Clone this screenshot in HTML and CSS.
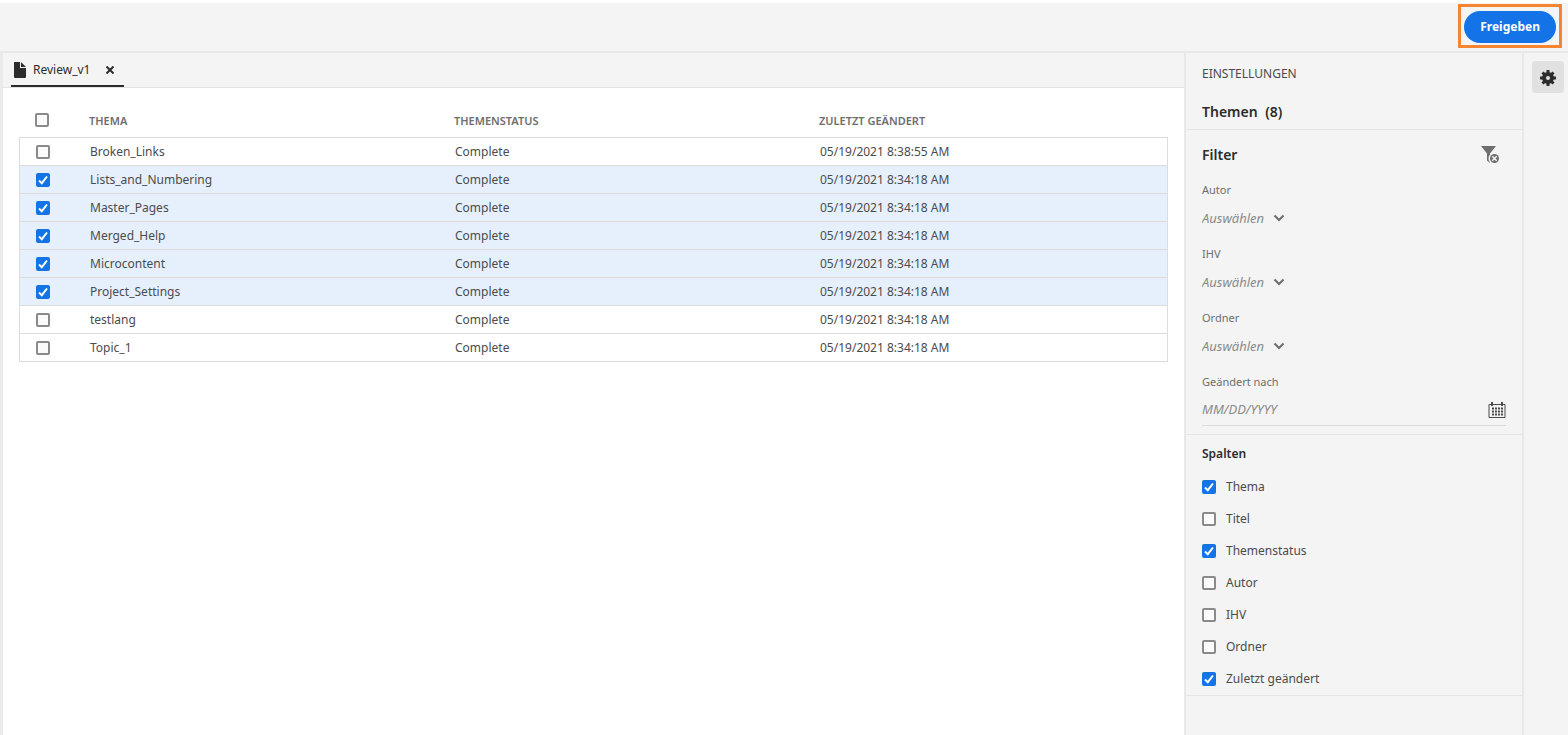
FILE: index.html
```html
<!DOCTYPE html>
<html lang="de">
<head>
<meta charset="utf-8">
<title>Review_v1</title>
<link rel="stylesheet" href="styles.css">
</head>
<body>
<header class="topbar">
  <div class="highlight"><button class="share" type="button">Freigeben</button></div>
</header>
<div class="workspace">
  <main class="main">
    <nav class="tabs">
      <div class="tab">
        <svg class="icon-doc" viewBox="0 0 12 16" aria-hidden="true"><path d="M0 0h6v6h6v9a1 1 0 0 1-1 1H1a1 1 0 0 1-1-1z"/><path d="M7 0l5 5H7z"/></svg>
        <span class="tab-name">Review_v1</span>
        <button class="close" type="button" aria-label="Schließen"><svg viewBox="0 0 8 8" aria-hidden="true"><path d="M0.5 0.5l7 7M7.500 0.5l-7 7"/></svg></button>
      </div>
    </nav>
    <div class="content">
      <table class="topics">
        <thead>
          <tr><th class="pick"><input class="check" type="checkbox" aria-label="Alle auswählen"></th><th class="col">Thema</th><th class="col">Themenstatus</th><th>Zuletzt geändert</th></tr>
        </thead>
        <tbody>
          <tr><td><input class="check" type="checkbox" aria-label="Broken_Links"></td><td>Broken_Links</td><td>Complete</td><td>05/19/2021 8:38:55 AM</td></tr>
          <tr class="selected"><td><input class="check" type="checkbox" checked aria-label="Lists_and_Numbering"></td><td>Lists_and_Numbering</td><td>Complete</td><td>05/19/2021 8:34:18 AM</td></tr>
          <tr class="selected"><td><input class="check" type="checkbox" checked aria-label="Master_Pages"></td><td>Master_Pages</td><td>Complete</td><td>05/19/2021 8:34:18 AM</td></tr>
          <tr class="selected"><td><input class="check" type="checkbox" checked aria-label="Merged_Help"></td><td>Merged_Help</td><td>Complete</td><td>05/19/2021 8:34:18 AM</td></tr>
          <tr class="selected"><td><input class="check" type="checkbox" checked aria-label="Microcontent"></td><td>Microcontent</td><td>Complete</td><td>05/19/2021 8:34:18 AM</td></tr>
          <tr class="selected"><td><input class="check" type="checkbox" checked aria-label="Project_Settings"></td><td>Project_Settings</td><td>Complete</td><td>05/19/2021 8:34:18 AM</td></tr>
          <tr><td><input class="check" type="checkbox" aria-label="testlang"></td><td>testlang</td><td>Complete</td><td>05/19/2021 8:34:18 AM</td></tr>
          <tr><td><input class="check" type="checkbox" aria-label="Topic_1"></td><td>Topic_1</td><td>Complete</td><td>05/19/2021 8:34:18 AM</td></tr>
        </tbody>
      </table>
    </div>
  </main>
  <aside class="settings">
    <section class="section intro">
      <div class="caption">EINSTELLUNGEN</div>
      <h2 class="title">Themen <span class="count">(8)</span></h2>
    </section>
    <section class="section filters">
      <div class="filter-head">
        <h2 class="title">Filter</h2>
        <button class="plain" type="button" aria-label="Filter löschen"><svg class="icon-filter" viewBox="0 0 18 18" aria-hidden="true"><path d="M0 0h15L9 7.500V17L6 14.500V7.500z"/><circle class="halo" cx="13" cy="12.500" r="5.500"/><circle cx="13.500" cy="12.500" r="4.500"/><path class="cross" d="M11.300 10.300l4.400 4.400M15.700 10.300l-4.400 4.400"/></svg></button>
      </div>
      <div class="field">
        <label for="author">Autor</label>
        <div class="picker"><select id="author"><option>Auswählen</option></select><svg class="chevron" viewBox="0 0 12 8" aria-hidden="true"><path d="M1.500 1.500L6 6l4.500-4.500"/></svg></div>
      </div>
      <div class="field">
        <label for="toc">IHV</label>
        <div class="picker"><select id="toc"><option>Auswählen</option></select><svg class="chevron" viewBox="0 0 12 8" aria-hidden="true"><path d="M1.500 1.500L6 6l4.500-4.500"/></svg></div>
      </div>
      <div class="field">
        <label for="folder">Ordner</label>
        <div class="picker"><select id="folder"><option>Auswählen</option></select><svg class="chevron" viewBox="0 0 12 8" aria-hidden="true"><path d="M1.500 1.500L6 6l4.500-4.500"/></svg></div>
      </div>
      <div class="field date-field">
        <label for="after">Geändert nach</label>
        <div class="date"><input id="after" type="text" placeholder="MM/DD/YYYY"><button class="calendar" type="button" aria-label="Kalender"><svg class="icon-cal" viewBox="0 0 18 17" aria-hidden="true"><path class="frame" d="M1 2.500h16v13H1z"/><path d="M3 0h2v4H3zM13 0h2v4h-2z"/><path class="days" d="M4 6.500h11M4 9.500h11M4 12.500h11"/></svg></button></div>
      </div>
    </section>
    <section class="section columns">
      <h3 class="subtitle">Spalten</h3>
      <label class="option"><input class="check" type="checkbox" checked>Thema</label>
      <label class="option"><input class="check" type="checkbox">Titel</label>
      <label class="option"><input class="check" type="checkbox" checked>Themenstatus</label>
      <label class="option"><input class="check" type="checkbox">Autor</label>
      <label class="option"><input class="check" type="checkbox">IHV</label>
      <label class="option"><input class="check" type="checkbox">Ordner</label>
      <label class="option"><input class="check" type="checkbox" checked>Zuletzt geändert</label>
    </section>
  </aside>
  <div class="rail">
    <button class="gear" type="button" aria-label="Einstellungen"><svg viewBox="0 0 16 16" aria-hidden="true"><circle class="ring" cx="8" cy="8" r="4"/><path class="teeth" d="M8 0v3.500M8 12.500V16M0 8h3.500M12.500 8H16M2.500 2.500L5 5M11 11l2.500 2.500M13.500 2.500L11 5M5 11l-2.500 2.500"/></svg></button>
  </div>
</div>
</body>
</html>
```

FILE: styles.css
```css
* { box-sizing: border-box; }

body {
  margin: 0;
  min-height: 100vh;
  display: flex;
  flex-direction: column;
  background: #fff;
  color: #4b4b4b;
  font: 12px/20px "Noto Sans", "Open Sans", sans-serif;
}

button, input, select { font: inherit; color: inherit; margin: 0; }
button { border: 0; padding: 0; background: none; }
h2, h3 { margin: 0; color: #2c2c2c; font-weight: 600; }
svg { display: block; }

.topbar {
  display: flex;
  justify-content: flex-end;
  align-items: flex-start;
  padding: 1px 6px 3px;
  background: #f4f4f4;
  border-top: 3px solid #fff;
  border-bottom: 2px solid #e8e8e8;
}
.highlight { padding: 4px 3px 2px; border: 3px solid #f68531; }
.share {
  display: block;
  height: 32px;
  padding: 0 16px;
  border-radius: 16px;
  background: #1473e6;
  color: #fff;
  font-weight: 700;
}

.workspace { flex: 1; display: flex; }
.main { flex: 1; border-left: 3px solid #eaeaea; }

.tabs {
  display: flex;
  height: 35px;
  padding-left: 8px;
  background: #f4f4f4;
  border-bottom: 1px solid #e4e4e4;
}
.tab {
  display: flex;
  align-items: center;
  padding: 1px 10px 0 3px;
  border-bottom: 2px solid #2c2c2c;
  color: #2c2c2c;
}
.icon-doc { width: 12px; height: 16px; margin-right: 7px; fill: #2c2c2c; }
.close { margin-left: 16px; }
.close svg { width: 8px; height: 8px; fill: none; stroke: #2c2c2c; stroke-width: 2; }

.content { padding: 16px; }
.topics { width: 100%; table-layout: fixed; border-spacing: 0; }
.topics th {
  height: 33px;
  padding: 0;
  color: #6e6e6e;
  font-size: 11px;
  font-weight: 600;
  text-align: left;
  text-transform: uppercase;
}
.topics .pick { width: 70px; padding-bottom: 2px; }
.topics .col { width: 365px; }
.topics td {
  height: 28px;
  padding: 0 1px;
  border-bottom: 1px solid #dcdcdc;
}
.topics th:first-child, .topics td:first-child { padding-left: 16px; }
.topics td:first-child { border-left: 1px solid #dcdcdc; }
.topics td:last-child { border-right: 1px solid #dcdcdc; }
.topics tbody tr:first-child td { height: 29px; border-top: 1px solid #dcdcdc; }
.selected { background: #e6f0fd; }

.check {
  appearance: none;
  display: block;
  flex: none;
  width: 14px;
  height: 14px;
  border: 2px solid #8a8a8a;
  border-radius: 2px;
  background: #fbfbfb;
}
.check:checked {
  border-color: #1473e6;
  background: #1473e6 url("data:image/svg+xml,%3Csvg xmlns='http://www.w3.org/2000/svg' viewBox='0 0 10 10'%3E%3Cpath d='M1 5.500l2.800 2.700L9 1.500' fill='none' stroke='white' stroke-width='2'/%3E%3C/svg%3E") center / 10px 10px no-repeat;
}

.settings {
  width: 340px;
  background: #f4f4f4;
  border-left: 2px solid #e8e8e8;
  border-right: 2px solid #e8e8e8;
}
.section { padding: 0 16px; border-bottom: 1px solid #e6e6e6; }
.intro { padding-top: 11px; padding-bottom: 6px; }
.caption { margin-bottom: 17px; }
.title { font-size: 14px; line-height: 22px; }
.count { margin-left: 4px; }
.filters { padding-top: 14px; padding-bottom: 8px; }
.filter-head { display: flex; justify-content: space-between; align-items: center; padding-right: 7px; margin-bottom: 14px; }
.icon-filter { width: 18px; height: 18px; fill: #6e6e6e; }
.icon-filter .halo { fill: #f4f4f4; }
.icon-filter .cross { fill: none; stroke: #f4f4f4; stroke-width: 1.500; }
.field { height: 64px; }
.field label { display: block; color: #6e6e6e; font-size: 11px; }
.picker { display: flex; align-items: center; gap: 8px; margin-top: 8px; }
.picker select {
  appearance: none;
  height: 20px;
  padding: 0;
  border: 0;
  background: none;
  color: #8a8a8a;
  font-size: 13px;
  font-style: italic;
}
.chevron { width: 12px; height: 8px; fill: none; stroke: #6e6e6e; stroke-width: 2; }
.date-field { height: auto; }
.date { display: flex; align-items: center; height: 34px; border-bottom: 1px solid #dcdcdc; }
.date input { flex: 1; min-width: 0; height: 20px; padding: 0; border: 0; background: none; font-size: 13px; }
.date input::placeholder { color: #8a8a8a; font-style: italic; opacity: 1; }
.calendar { padding-top: 3px; }
.icon-cal { width: 18px; height: 17px; fill: #4b4b4b; }
.icon-cal .frame { fill: none; stroke: #4b4b4b; stroke-width: 1; }
.icon-cal .days { stroke: #4b4b4b; stroke-width: 2; stroke-dasharray: 2 1; }
.columns { padding-top: 9px; }
.subtitle { margin-bottom: 7px; font-size: 12px; line-height: 20px; }
.option { display: flex; align-items: center; gap: 10px; height: 32px; }

.rail { width: 44px; padding: 8px 4px 0 8px; background: #f4f4f4; }
.gear {
  display: grid;
  place-items: center;
  width: 32px;
  height: 32px;
  padding-top: 2px;
  border-radius: 4px;
  background: #e1e1e1;
}
.gear svg { width: 16px; height: 16px; fill: none; stroke: #2c2c2c; }
.gear .ring { stroke-width: 4; }
.gear .teeth { stroke-width: 3; }
```
